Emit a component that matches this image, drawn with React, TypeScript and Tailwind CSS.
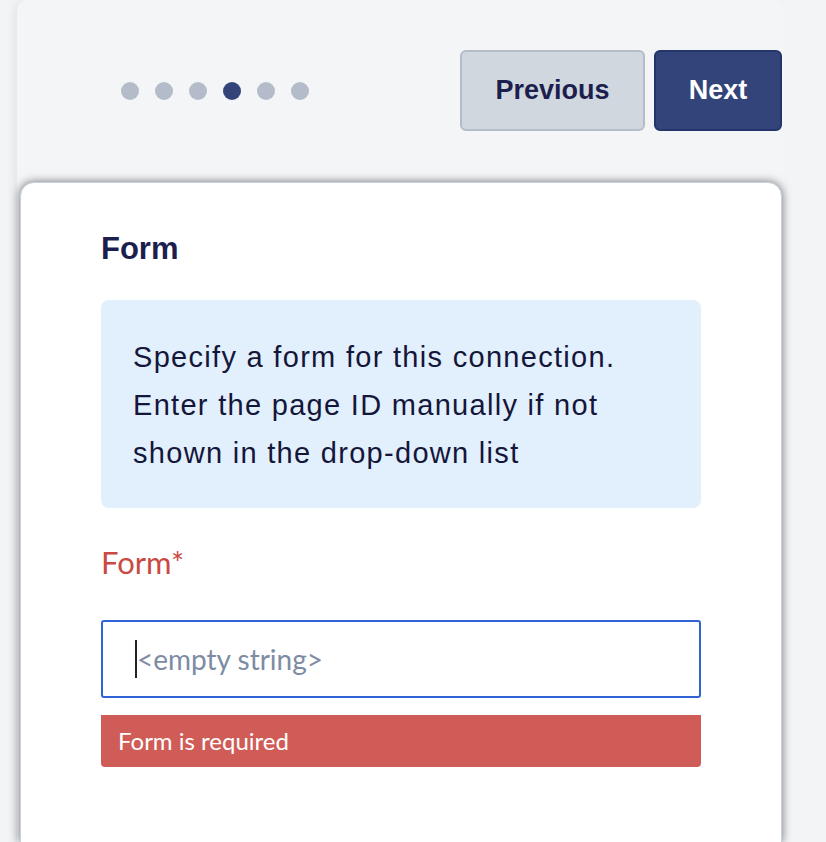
const steps = [0, 1, 2, 3, 4, 5];
const current = 3;

export default function App() {
  return (
    <div className="min-h-screen bg-[#f3f4f6] pl-[17px] pr-[41px] font-['Liberation_Sans',Arial,sans-serif]">
      <div className="rounded-t-[10px] bg-[#f4f5f7] shadow-[-4px_0_8px_rgba(0,0,0,0.06)]">
        {/* Stepper header */}
        <div className="flex h-[181px] items-center justify-between pl-[104px] pr-[3px]">
          <div className="flex items-center gap-4">
            {steps.map((s) => (
              <span
                key={s}
                className={
                  s === current
                    ? 'h-[18px] w-[18px] rounded-full bg-[#324479]'
                    : 'h-[18px] w-[18px] rounded-full bg-[#b3bcc8]'
                }
              />
            ))}
          </div>
          <div className="flex items-center gap-[9px]">
            <button className="h-[81px] w-[185px] rounded-md border-2 border-[#b3bcc9] bg-[#d1d7df] text-[27px] font-bold text-[#1c1f4e]">
              Previous
            </button>
            <button className="h-[81px] w-[128px] rounded-md border-2 border-[#24356b] bg-[#324479] text-[27px] font-bold text-white">
              Next
            </button>
          </div>
        </div>

        {/* Card */}
        <div className="mx-[3px] mt-px min-h-[661px] rounded-t-[14px] border border-[#c8d1de] bg-white pl-[80px] pr-[80px] pt-[47px] shadow-[0_0_10px_rgba(0,0,0,0.55)]">
          <h2 className="text-[31px] font-bold leading-[38px] text-[#1c1f4e]">Form</h2>

          <div className="mt-[32px] rounded-lg bg-[#e2effc] pb-[31px] pl-8 pr-4 pt-[33px] text-[29px] leading-[48px] tracking-[1.3px] text-[#14163a] font-['Liberation_Sans',Helvetica,sans-serif]">
            Specify a form for this connection.
            <br />
            Enter the page ID manually if not
            <br />
            shown in the drop-down list
          </div>

          <div className="font-['Lato','Noto_Sans',sans-serif]">
            <label className="mt-[34px] block text-[31px] leading-[40px] text-[#c94a42]">Form*</label>

            <div className="mt-[38px] flex h-[78px] items-center rounded-[3px] border-2 border-[#2f63d6] pl-[32px]">
              <span className="h-[38px] w-[2px] bg-[#222]" />
              <span className="text-[28px] text-[#7d8ca2]">&lt;empty string&gt;</span>
            </div>

            <div className="mt-[17px] flex h-[52px] items-center rounded-b-[4px] bg-[#d05c57] pl-[17px] text-[24px] text-white">
              Form is required
            </div>
          </div>
        </div>
      </div>
    </div>
  );
}
